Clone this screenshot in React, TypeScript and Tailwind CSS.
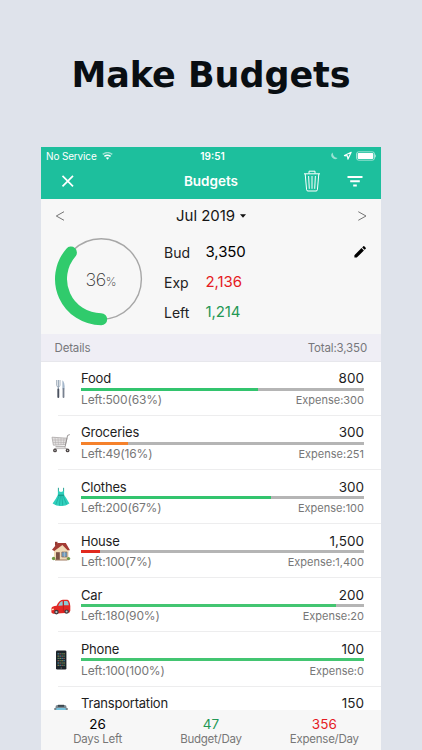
import React from "react";

function Utensils() {
  return (
    <svg className="shrink-0" width="20" height="20" viewBox="0 0 20 20" fill="none">
      <path d="M5.6 1v5.2q0 1.6 1.7 1.8 1.7-.2 1.7-1.8V1" stroke="#a9b4c0" strokeWidth="1" />
      <path d="M7.3 1v9" stroke="#8fa0b2" strokeWidth="1.1" />
      <path d="M7.3 10.5v7.5" stroke="#4b5260" strokeWidth="1.9" strokeLinecap="round" />
      <path d="M11.4 1.2q2.6 2 2.2 9h-2.2z" fill="#a5b7cb" />
      <path d="M12.5 10v8" stroke="#78818f" strokeWidth="1.8" strokeLinecap="round" />
    </svg>
  );
}

function Cart() {
  return (
    <svg className="shrink-0" width="20" height="20" viewBox="0 0 20 20" fill="none">
      <path d="M1 4.2L16 5.2l-1.6 6.4-12 .6z" fill="#e3e1e1" stroke="#aaa6a6" strokeWidth=".8" />
      <path d="M4 4.5l.8 7.5M7 4.7l.4 7.2M10 4.9v6.9M13 5l-.7 6.7M1.5 7h14M2 9.5h13" stroke="#b5b0b0" strokeWidth=".6" />
      <path d="M18.8 1.6l-2.2.8-2.5 11.4H4.5M14 14.4l2 2" stroke="#8f8a8a" strokeWidth=".9" />
      <path d="M3.5 15.6h12.5" stroke="#b2adad" strokeWidth=".8" />
      <circle cx="4" cy="17.4" r="1.9" fill="#4d4646" /><circle cx="4" cy="17.4" r=".6" fill="#ccc" />
      <circle cx="16.6" cy="17.4" r="1.9" fill="#4d4646" /><circle cx="16.6" cy="17.4" r=".6" fill="#ccc" />
    </svg>
  );
}

function Dress() {
  return (
    <svg className="shrink-0" width="20" height="20" viewBox="0 0 20 20" fill="none">
      <path d="M7.4.8v4M12.6.8v4" stroke="#25a596" strokeWidth="1" />
      <path d="M7 3.5q1.5 1.4 3 1.4t3-1.4l.2 4.4q2.9 4.2 5.2 8.6-3.8 2.6-8.4 2.5-4.6.1-8.4-2.5 3-4 5.2-8.6z" fill="#2fd0bd" />
      <path d="M7 8.2h6" stroke="#148778" strokeWidth="1" />
      <path d="M8 9L4.8 17.6M9.4 9L8.4 18.6M10.8 9l1 9.6M12.2 9l3.4 8.4" stroke="#1aa696" strokeWidth=".7" />
    </svg>
  );
}

function House() {
  return (
    <svg className="shrink-0" width="20" height="20" viewBox="0 0 20 20" fill="none">
      <path d="M3 8.5l4.5-5.7h6.8l3.3 5.7V19H3z" fill="#f0d9b6" />
      <path d="M4 .8h2.5v4H4z" fill="#913a32" />
      <path d="M1 8.8L6.6 1.9h8.2L19 9.2h-2.5L11.4 4 3.3 10z" fill="#a33b34" />
      <path d="M5 11.2h3.8V19H5z" fill="#795044" />
      <path d="M10.8 11h5.2v5h-5.2z" fill="#6d9cc4" stroke="#8b6b58" strokeWidth=".7" />
      <path d="M13.4 11v5" stroke="#e7d7be" strokeWidth=".5" />
      <circle cx="2.6" cy="17.5" r="1.7" fill="#6f9845" />
      <circle cx="17.5" cy="17.6" r="1.7" fill="#6f9845" />
      <path d="M4 19h12.5" stroke="#9f7b60" />
    </svg>
  );
}

function Car() {
  return (
    <svg className="shrink-0" width="20" height="20" viewBox="0 -2.4 20 20" fill="none">
      <path d="M.5 10.6q.7-2 5.1-2.2Q8 3 11.8 2.4h4.6q2.2.2 2.9 6.2v4.8l-1 1.9L2 16.4.4 15z" fill="#e22724" />
      <path d="M7.2 8.3q2-4.3 4.4-4.6l.2 4.3zM13 3.6h3.2q1.2.5 1.6 4.2H13z" fill="#8bcbd6" />
      <path d="M12.4 4v10" stroke="#a81719" strokeWidth=".6" />
      <circle cx="5.4" cy="14.7" r="2.3" fill="#3c393d" /><circle cx="5.4" cy="14.7" r="1.1" fill="#bfc2c5" />
      <circle cx="15.6" cy="14.2" r="2.2" fill="#3c393d" /><circle cx="15.6" cy="14.2" r="1" fill="#bfc2c5" />
      <path d="M.9 11.6l1.9-.4v1.4l-2 .2z" fill="#ffe1bd" />
    </svg>
  );
}

function Phone() {
  const apps = ["#69b9d5", "#dd7869", "#78bd75", "#d9b85e"];
  return (
    <svg className="shrink-0" width="20" height="20" viewBox="0 0 20 20" fill="none">
      <rect x="5" y=".6" width="10.4" height="18.8" rx="1.2" fill="#1d2228" />
      <rect x="6" y="2.5" width="8.4" height="14.3" fill="#17262d" />
      {[0, 1, 2, 3, 4, 5].map((r) =>
        [0, 1, 2, 3].map((c) => (
          <rect key={`${r}-${c}`} x={6.6 + c * 1.95} y={3.2 + r * 2.3} width="1.2" height="1.2" fill={apps[(r * 3 + c) % 4]} opacity=".8" />
        ))
      )}
      <circle cx="10.2" cy="18" r=".7" fill="#6c7379" />
    </svg>
  );
}

function Bus() {
  return (
    <svg className="shrink-0" width="20" height="20" viewBox="0 0 20 20" fill="none">
      <rect x="4.5" y="1" width="11" height="16" rx="2" fill="#7b878f" />
      <rect x="7" y=".8" width="6" height="2" fill="#3d474e" />
      <path d="M5.5 4h9l1 6h-11z" fill="#74c3df" />
      <path d="M4 4v4M16 4v4" stroke="#38464e" />
    </svg>
  );
}

type Row = {
  name: string;
  amount: string;
  detail?: { left: string; spent: string; fill: number; color: string };
  Icon: () => React.JSX.Element;
};

const rows: Row[] = [
  { name: "Food", amount: "800", detail: { left: "500(63%)", spent: "300", fill: 62.5, color: "bg-[#33c46e]" }, Icon: Utensils },
  { name: "Groceries", amount: "300", detail: { left: "49(16%)", spent: "251", fill: 16.5, color: "bg-[#f5812b]" }, Icon: Cart },
  { name: "Clothes", amount: "300", detail: { left: "200(67%)", spent: "100", fill: 67, color: "bg-[#33c46e]" }, Icon: Dress },
  { name: "House", amount: "1,500", detail: { left: "100(7%)", spent: "1,400", fill: 6.7, color: "bg-[#e1291d]" }, Icon: House },
  { name: "Car", amount: "200", detail: { left: "180(90%)", spent: "20", fill: 90, color: "bg-[#43c571]" }, Icon: Car },
  { name: "Phone", amount: "100", detail: { left: "100(100%)", spent: "0", fill: 100, color: "bg-[#43c571]" }, Icon: Phone },
  { name: "Transportation", amount: "150", Icon: Bus },
];

function BudgetRow({ row }: { row: Row }) {
  const { Icon, detail } = row;
  return (
    <div className="flex h-[54.1px] shrink-0">
      <div className="flex w-[17px] shrink-0 items-center pl-[10px]">
        <Icon />
      </div>
      <div className="h-full flex-1 border-b border-[#ededee] pt-[7.4px] pr-[17px] pl-[23px]">
        <div className="flex h-[18.6px] items-start justify-between text-[13px] leading-[18px] text-[#1d1d1d]">
          <span className="tracking-[-0.2px]">{row.name}</span>
          <span className="text-[13.5px]">{row.amount}</span>
        </div>
        {detail && (
          <>
            <div className="h-[2.6px] bg-[#b5b5b5]">
              <div className={`h-full ${detail.color}`} style={{ width: `${detail.fill}%` }} />
            </div>
            <div className="flex h-[18px] items-center justify-between pt-px leading-[18px] text-[#777]">
              <span className="text-[12px] tracking-[-0.15px]">Left:{detail.left}</span>
              <span className="text-[11px]">Expense:{detail.spent}</span>
            </div>
          </>
        )}
      </div>
    </div>
  );
}

function StatusBar() {
  return (
    <div className="grid h-[17px] grid-cols-3 items-center px-[5px] text-[10px] leading-none text-white">
      <div className="flex items-center gap-[5px]">
        <span className="tracking-[-0.15px]">No Service</span>
        <svg width="11" height="8" viewBox="0 0 11 8" fill="none">
          <path d="M.7 2.4Q5.5-1.3 10.3 2.4" stroke="white" strokeOpacity=".55" strokeWidth="1.4" />
          <path d="M2.4 4.3q3.1-2.2 6.2 0" stroke="white" strokeWidth="1.5" />
          <path d="M3.8 5.8q1.7-1.1 3.4 0L5.5 7.7z" fill="white" />
        </svg>
      </div>
      <span className="pt-[2px] pl-[3px] text-center text-[10px] leading-[11px] font-semibold">19:51</span>
      <div className="flex items-center justify-end">
        <svg width="47" height="10" viewBox="0 0 47 10" fill="none">
          <path d="M3.6 1.5A3.7 3.7 0 1 0 8.6 7Q4.2 6.6 3.6 1.5z" fill="white" opacity=".55" />
          <path d="M22.2 1.2l-6.8 3.4 3.1.3.4 3.3z" stroke="white" strokeWidth="1.1" strokeLinejoin="round" />
          <rect x="27.5" y=".8" width="18" height="8.4" rx="2.2" stroke="white" strokeOpacity=".55" />
          <rect x="28.7" y="2" width="15.6" height="6" rx="1" fill="white" />
          <path d="M46.4 3.7v2.6" stroke="white" strokeOpacity=".55" />
        </svg>
      </div>
    </div>
  );
}

export default function App() {
  return (
    <div className="flex h-[750px] w-[422px] flex-col overflow-hidden bg-[#dfe3eb] font-['Inter','Liberation_Sans',sans-serif]">
      <h1 className="flex h-[147px] shrink-0 items-center justify-center pt-[3px] text-[35px] font-bold tracking-[-0.05px] text-[#090e12] font-['DejaVu_Sans',sans-serif]">
        Make Budgets
      </h1>
      <div className="ml-[41px] flex h-[603px] w-[340px] flex-col bg-white">
        <header className="h-[52px] shrink-0 bg-[#1dbf9d]">
          <StatusBar />
          <div className="grid h-[34px] grid-cols-3 items-center text-white">
            <svg className="ml-[20px]" width="14" height="14" viewBox="0 0 14 14">
              <path d="M1.5 1.8l10.5 10.5M12 1.8L1.5 12.3" stroke="white" strokeWidth="1.7" />
            </svg>
            <span className="pt-px text-center text-[13.5px] font-semibold">Budgets</span>
            <div className="flex items-center justify-end gap-[26px] pr-[18.5px]">
              <svg width="18" height="22" viewBox="0 0 18 22" fill="none" stroke="white" strokeWidth="1">
                <path d="M1 3.8h16M6 3.5V1.2h6v2.3M2.2 4l1.4 15.8q.1 1.2 1.4 1.2h8q1.3 0 1.4-1.2L15.8 4M5.6 6l.7 12.8M9 6v12.8M12.4 6l-.7 12.8" />
              </svg>
              <svg width="16" height="12" viewBox="0 0 16 12" stroke="white" strokeWidth="1.9">
                <path d="M.5 2h15M3.2 6.3h9.6M6.2 10.5h3.6" />
              </svg>
            </div>
          </div>
        </header>
        <section className="flex h-[135px] shrink-0 flex-col bg-[#f7f7f7]">
          <div className="flex h-[33px] items-center justify-between px-[14px] pt-px">
            <svg width="10" height="10" viewBox="0 0 10 10" fill="none" stroke="#757575">
              <path d="M9 .7L1.3 5 9 9.3" />
            </svg>
            <div className="flex items-center gap-[5px] text-[15px] tracking-[-0.05px] text-[#151515]">
              Jul 2019
              <svg width="6" height="4" viewBox="0 0 6 4"><path d="M0 .3h6L3 3.7z" fill="#111" /></svg>
            </div>
            <svg width="10" height="10" viewBox="0 0 10 10" fill="none" stroke="#757575">
              <path d="M1.3 .7L9 5 1.3 9.3" />
            </svg>
          </div>
          <div className="flex h-[102px]">
            <div className="ml-[13px] grid h-[94px] w-[94px] shrink-0 place-items-center">
              <svg className="col-start-1 row-start-1" width="94" height="94" viewBox="0 0 94 94" fill="none">
                <circle cx="47.2" cy="47" r="40.2" stroke="#a7a7a7" strokeWidth="1.4" />
                <path d="M47.2 87.2A40.2 40.2 0 0 1 16.9 20.6" stroke="#30cb6c" strokeWidth="12" strokeLinecap="round" />
              </svg>
              <span className="col-start-1 row-start-1 pt-px text-[18px] leading-none font-extralight tracking-[-0.4px] text-[#303030]">
                36<span className="text-[12px] tracking-normal">%</span>
              </span>
            </div>
            <div className="ml-[16px] flex flex-col pt-[5px] text-[14px] text-[#222]">
              <div className="flex h-[30px] items-center"><span className="w-[41.5px]">Bud</span><span className="text-[15px] tracking-[-0.1px] text-black">3,350</span></div>
              <div className="flex h-[30px] items-center"><span className="w-[41.5px]">Exp</span><span className="text-[15px] tracking-[-0.1px] text-[#e51b23]">2,136</span></div>
              <div className="flex h-[30px] items-center"><span className="w-[41.5px]">Left</span><span className="text-[15px] tracking-[-0.1px] text-[#249855]">1,214</span></div>
            </div>
            <svg className="mt-[14px] mr-[15px] ml-auto" width="12" height="12" viewBox="0 0 12 12" fill="black">
              <path d="M.4 9.2L7.5 2.1l2.4 2.4-7.1 7.1H.4zM8.2 1.4L9.3.3q.5-.4 1 0l1.4 1.4q.4.5 0 1l-1.1 1.1z" />
            </svg>
          </div>
        </section>
        <div className="flex h-[28px] shrink-0 items-center justify-between border-b border-[#e7e7ec] bg-[#efeef5] pt-[2px] pr-[14px] pl-[13.5px] text-[11.5px] tracking-[-0.15px] text-[#77777b]">
          <span>Details</span>
          <span>Total:3,350</span>
        </div>
        <main className="flex h-[348px] shrink-0 flex-col overflow-hidden">
          {rows.map((row) => <BudgetRow key={row.name} row={row} />)}
        </main>
        <footer className="grid h-[40px] shrink-0 grid-cols-3 bg-[#f7f7f7] text-center text-[11.5px] leading-[15px] tracking-[-0.25px] text-[#777]">
          <div className="pt-[7px]"><div className="text-[13.5px] tracking-normal text-black">26</div><div>Days Left</div></div>
          <div className="pt-[7px]"><div className="text-[13.5px] tracking-normal text-[#249855]">47</div><div>Budget/Day</div></div>
          <div className="pt-[7px]"><div className="text-[13.5px] tracking-normal text-[#e51b23]">356</div><div>Expense/Day</div></div>
        </footer>
      </div>
    </div>
  );
}
